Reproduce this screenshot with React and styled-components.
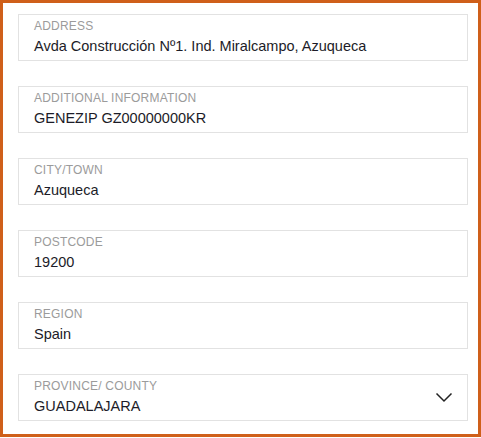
import React from "react";
import styled, { createGlobalStyle } from "styled-components";

const GlobalStyle = createGlobalStyle`
  body {
    margin: 0;
    background: #fff;
    font-family: "Liberation Sans", Arial, sans-serif;
  }
`;

const fields = [
  { label: "ADDRESS", value: "Avda Construcción Nº1. Ind. Miralcampo, Azuqueca" },
  { label: "ADDITIONAL INFORMATION", value: "GENEZIP GZ00000000KR" },
  { label: "CITY/TOWN", value: "Azuqueca" },
  { label: "POSTCODE", value: "19200" },
  { label: "REGION", value: "Spain" },
  { label: "PROVINCE/ COUNTY", value: "GUADALAJARA", select: true },
];

const Chevron = () => (
  <svg width="18" height="11" viewBox="0 0 18 11" fill="none">
    <path d="M1.5 1.5L9 9L16.5 1.5" stroke="#222" strokeWidth="1.5" />
  </svg>
);

const App = () => {
  return (
    <>
      <GlobalStyle />
      <Panel>
        {fields.map((f) => (
          <Field key={f.label}>
            <FieldText>
              <Label>{f.label}</Label>
              <Value>{f.value}</Value>
            </FieldText>
            {f.select && <Chevron />}
          </Field>
        ))}
      </Panel>
    </>
  );
};

const Panel = styled.div`
  box-sizing: border-box;
  width: 481px;
  height: 437px;
  border: 3px solid #cf5f1a;
  padding: 11px 10px 0 15px;
  display: flex;
  flex-direction: column;
  gap: 25px;
`;

const Field = styled.div`
  box-sizing: border-box;
  height: 47px;
  border: 1px solid #e2e2e2;
  padding: 4px 14px 0 15px;
  display: flex;
  align-items: center;
  justify-content: space-between;
  svg {
    margin-top: -4px;
  }
`;

const FieldText = styled.div`
  display: flex;
  flex-direction: column;
  align-self: flex-start;
`;

const Label = styled.span`
  font-size: 12px;
  line-height: 15px;
  letter-spacing: 0.2px;
  color: #9b9b9b;
`;

const Value = styled.span`
  margin-top: 3px;
  font-size: 14.5px;
  line-height: 18px;
  color: #1c1c28;
`;

export default App;
